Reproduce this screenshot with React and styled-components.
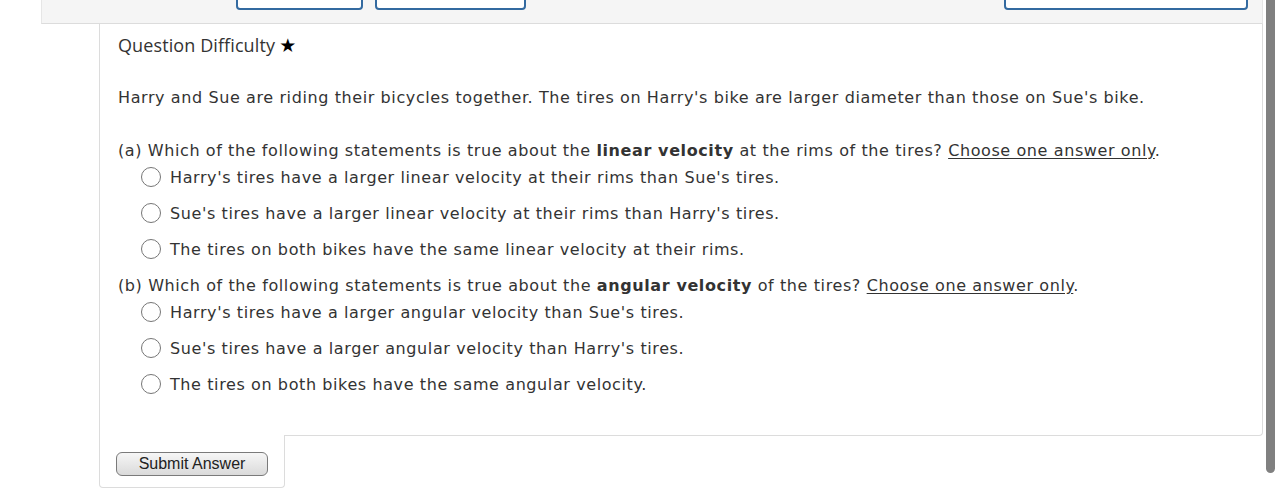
import React from 'react';
import styled, { createGlobalStyle } from 'styled-components';

const GlobalStyle = createGlobalStyle`
    body {
        margin: 0;
        background: #fff;
        font-family: "DejaVu Sans", Verdana, sans-serif;
        color: #333;
    }
`;

const Page = styled.div`
    display: flex;
    flex-direction: column;
    margin-left: 41px;
    width: 1222px;
`;

const TopBar = styled.div`
    display: flex;
    align-items: flex-end;
    height: 24px;
    padding: 0 14px 13px 194px;
    box-sizing: border-box;
    background: #f5f5f5;
    border-left: 1px solid #e6e6e6;
    border-right: 1px solid #e6e6e6;
    border-bottom: 1px solid #dcdcdc;
    gap: 12px;
    overflow: hidden;
`;

const NavButton = styled.div`
    width: ${({ w }) => w}px;
    height: 30px;
    flex: none;
    box-sizing: border-box;
    border: 2px solid #336aa0;
    border-radius: 4px;
    background: #fff;
    margin-left: ${({ push }) => (push ? 'auto' : '0')};
`;

const Panel = styled.div`
    margin-left: 58px;
    padding: 10px 18px 33px;
    border: 1px solid #dcdcdc;
    border-top: none;
    border-bottom-right-radius: 4px;
    background: #fff;
    letter-spacing: 0.6px;
`;

const Difficulty = styled.div`
    font-family: "Open Sans", sans-serif;
    font-size: 18px;
    line-height: 22px;
    letter-spacing: 0.1px;
    color: #333;
`;

const Star = styled.span`
    color: #000;
    font-family: "DejaVu Sans", sans-serif;
    font-size: 19px;
    margin-left: -2px;
`;

const Intro = styled.p`
    margin: 32px 0 0;
    font-size: 16px;
    line-height: 20px;
`;

const Question = styled.div`
    margin-top: ${({ top }) => top}px;
    font-size: 16px;
    line-height: 16px;

    b {
        font-weight: bold;
    }

    u {
        text-decoration: underline;
        text-underline-offset: 2px;
    }
`;

const Options = styled.div`
    display: flex;
    flex-direction: column;
`;

const Option = styled.label`
    display: flex;
    align-items: center;
    height: 36px;
    padding-left: 23px;
    font-size: 16px;
    gap: 9px;
`;

const Radio = styled.input`
    appearance: none;
    margin: 0;
    width: 20px;
    height: 20px;
    flex: none;
    border: 1.5px solid #767676;
    border-radius: 50%;
    background: #fff;

    &:checked {
        background: radial-gradient(circle, #333 0 4px, #fff 5px);
    }
`;

const SubmitBox = styled.div`
    margin: -1px 0 0 58px;
    width: 186px;
    height: 53px;
    box-sizing: border-box;
    padding: 17px 0 0 16px;
    background: #fff;
    border: 1px solid #dcdcdc;
    border-top: none;
    border-radius: 0 0 4px 4px;
`;

const SubmitButton = styled.button`
    width: 152px;
    height: 24px;
    padding: 0;
    border: 1px solid #7a7a7a;
    border-radius: 6px;
    background: linear-gradient(#f6f6f6, #dadada);
    font-family: "Liberation Sans", Arial, sans-serif;
    font-size: 16px;
    color: #222;
`;

const Scrollbar = styled.div`
    position: fixed;
    top: 0;
    left: 1266px;
    width: 9px;
    height: 473px;
    background: #808080;
    border-radius: 0 0 5px 5px;
`;

const parts = [
    {
        key: 'a',
        top: 35,
        prompt: (
            <>
                (a) Which of the following statements is true about the <b>linear velocity</b> at the rims of the tires?{' '}
                <u>Choose one answer only</u>.
            </>
        ),
        options: [
            "Harry's tires have a larger linear velocity at their rims than Sue's tires.",
            "Sue's tires have a larger linear velocity at their rims than Harry's tires.",
            'The tires on both bikes have the same linear velocity at their rims.',
        ],
    },
    {
        key: 'b',
        top: 11,
        prompt: (
            <>
                (b) Which of the following statements is true about the <b>angular velocity</b> of the tires?{' '}
                <u>Choose one answer only</u>.
            </>
        ),
        options: [
            "Harry's tires have a larger angular velocity than Sue's tires.",
            "Sue's tires have a larger angular velocity than Harry's tires.",
            'The tires on both bikes have the same angular velocity.',
        ],
    },
];

export default function App() {
    return (
        <>
            <GlobalStyle />
            <Page>
                <TopBar>
                    <NavButton w={127} />
                    <NavButton w={151} />
                    <NavButton w={244} push />
                </TopBar>
                <Panel>
                    <Difficulty>
                        Question Difficulty<Star> ★</Star>
                    </Difficulty>
                    <Intro>
                        Harry and Sue are riding their bicycles together. The tires on Harry's bike are larger diameter than those on Sue's bike.
                    </Intro>
                    {parts.map((p) => (
                        <div key={p.key}>
                            <Question top={p.top}>{p.prompt}</Question>
                            <Options>
                                {p.options.map((o) => (
                                    <Option key={o}>
                                        <Radio type="radio" name={p.key} />
                                        {o}
                                    </Option>
                                ))}
                            </Options>
                        </div>
                    ))}
                </Panel>
                <SubmitBox>
                    <SubmitButton>Submit Answer</SubmitButton>
                </SubmitBox>
            </Page>
            <Scrollbar />
        </>
    );
}
